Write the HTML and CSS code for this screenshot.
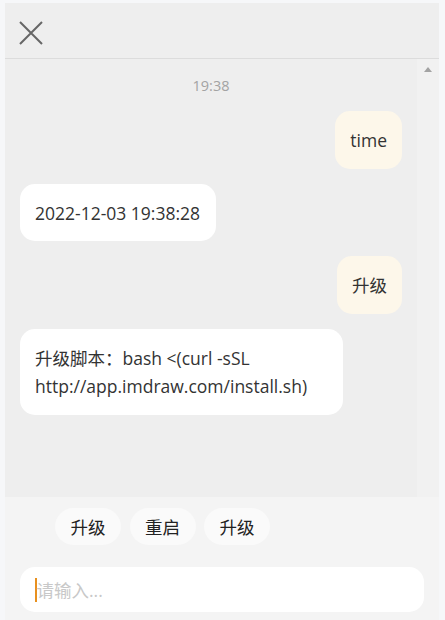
FILE: index.html
```html
<!DOCTYPE html>
<html lang="zh">
<head>
<meta charset="utf-8">
<title>Chat</title>
<link rel="stylesheet" href="styles.css">
</head>
<body>
<div class="app">
  <header class="header">
    <button class="close" aria-label="关闭">
      <svg width="24" height="24" viewBox="0 0 24 24"><path d="M1 1L23 23M23 1L1 23" stroke="#666" stroke-width="2" fill="none"/></svg>
    </button>
  </header>
  <div class="chat">
    <div class="messages">
      <div class="time">19:38</div>
      <div class="msg me"><div class="bubble">time</div></div>
      <div class="msg bot"><div class="bubble">2022-12-03 19:38:28</div></div>
      <div class="msg me"><div class="bubble">升级</div></div>
      <div class="msg bot"><div class="bubble wide">升级脚本：bash &lt;(curl -sSL http://app.imdraw.com/install.sh)</div></div>
    </div>
    <div class="scrollbar"><span class="arrow"></span></div>
  </div>
  <footer class="footer">
    <div class="chips">
      <button class="chip">升级</button>
      <button class="chip">重启</button>
      <button class="chip">升级</button>
    </div>
    <div class="input"><span class="caret"></span><span class="placeholder">请输入...</span></div>
  </footer>
</div>
</body>
</html>
```
FILE: styles.css
```css
html, body {
  margin: 0;
  padding: 0;
  height: 100%;
}
body {
  background: #f6f7f9;
  font-family: "Open Sans", "Noto Sans CJK SC", sans-serif;
  color: #333;
}
.app {
  margin: 3px 6px 0 5px;
  height: 617px;
  display: flex;
  flex-direction: column;
  background: #eeeeee;
}
.header {
  height: 55px;
  border-bottom: 1px solid #dcdcdc;
  display: flex;
  align-items: center;
  padding-left: 14px;
  flex: none;
}
.close {
  background: none;
  border: 0;
  padding: 0;
  width: 24px;
  height: 24px;
  margin-top: 5px;
  display: flex;
}
.chat {
  flex: 1;
  display: flex;
  min-height: 0;
}
.messages {
  flex: 1;
  padding: 18px 15px 0 15px;
  display: flex;
  flex-direction: column;
}
.scrollbar {
  width: 22px;
  background: #f1f1f1;
  display: flex;
  justify-content: center;
  padding-top: 8px;
}
.arrow {
  width: 0;
  height: 0;
  border-left: 4.5px solid transparent;
  border-right: 4.5px solid transparent;
  border-bottom: 5px solid #a3a3a3;
}
.time {
  text-align: center;
  font-size: 14.5px;
  line-height: 18px;
  color: #a3a3a3;
  margin-bottom: 16px;
}
.msg {
  display: flex;
  margin-bottom: 15px;
}
.msg.me {
  justify-content: flex-end;
}
.bubble {
  font-size: 17.5px;
  line-height: 28px;
  padding: 15px 16px 14px 15px;
  border-radius: 15px;
  background: #fff;
  color: #333;
}
.me .bubble {
  background: #fdf7ea;
  padding: 15px 15px 15px 15px;
}
.bubble.wide {
  max-width: 323px;
  box-sizing: border-box;
  padding-bottom: 15px;
}
.footer {
  flex: none;
  height: 123px;
  background: #f4f4f4;
  display: flex;
  flex-direction: column;
  padding: 11px 15px 0 15px;
  box-sizing: border-box;
}
.chips {
  display: flex;
  gap: 8.5px;
  padding-left: 35px;
}
.chip {
  font-family: inherit;
  font-size: 17.5px;
  color: #222;
  background: #fafafa;
  border: 0;
  border-radius: 19px;
  height: 37px;
  padding: 0 15.5px;
}
.input {
  margin-top: 22px;
  height: 45px;
  background: #fff;
  border-radius: 15px;
  display: flex;
  align-items: center;
  padding-left: 15px;
}
.caret {
  width: 1.5px;
  height: 24px;
  background: #e8901e;
}
.placeholder {
  font-size: 17.5px;
  color: #c8c8c8;
}
```
